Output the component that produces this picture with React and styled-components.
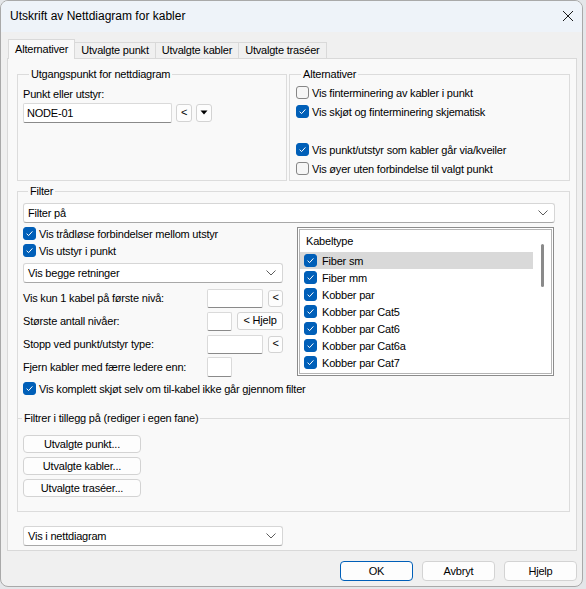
import React from "react";
import styled, { createGlobalStyle } from "styled-components";

const FONT = `"Liberation Sans", Arial, sans-serif`;

const GlobalStyle = createGlobalStyle`
  html, body { margin: 0; padding: 0; background: #e4e6e9; }
  body { font-family: ${FONT}; font-size: 11px; letter-spacing: -0.2px; color: #000; }
  * { box-sizing: border-box; }
`;

const Window = styled.div`
  width: 583px;
  height: 587px;
  background: #f0f0f0;
  border: 1px solid #a9a9a9;
  border-radius: 8px;
  overflow: hidden;
  display: flex;
  flex-direction: column;
`;

const TitleBar = styled.div`
  height: 31px;
  flex: none;
  background: #eef3f9;
  display: flex;
  align-items: center;
  justify-content: space-between;
  padding: 0 7px 1px 9px;
  font-size: 12px;
  letter-spacing: 0;
`;

const CloseBtn = styled.div`
  width: 14px;
  height: 14px;
  display: flex;
  align-items: center;
  justify-content: center;
`;

const Body = styled.div`
  flex: 1;
  display: flex;
  flex-direction: column;
  padding: 7px 5px 0 6px;
`;

const TabStrip = styled.div`
  display: flex;
  align-items: flex-end;
  height: 20px;
  padding-left: 1px;
  position: relative;
  z-index: 1;
  margin-bottom: -1px;
`;

const Tab = styled.div`
  height: ${(p) => (p.$active ? "20px" : "17px")};
  padding: ${(p) => (p.$active ? "0 6px 2px" : "0 6px 1px")};
  display: flex;
  align-items: center;
  border: 1px solid #d9d9d9;
  border-bottom: ${(p) => (p.$active ? "none" : "1px solid #d9d9d9")};
  margin-left: ${(p) => (p.$first ? "0" : "-1px")};
  background: ${(p) => (p.$active ? "#f9f9f9" : "#f0f0f0")};
  white-space: nowrap;
`;

const Panel = styled.div`
  width: 570px;
  height: 493px;
  background: #f9f9f9;
  border: 1px solid #d9d9d9;
  padding: 8px 6px 0 9px;
  display: flex;
  flex-direction: column;
`;

const TopRow = styled.div`
  display: grid;
  grid-template-columns: 270px 281px;
  column-gap: 2px;
  height: 114px;
`;

const Group = styled.fieldset`
  margin: 0;
  margin-top: ${(p) => p.$mt || "0"};
  min-width: 0;
  border: 1px solid #dcdcdc;
  padding: ${(p) => p.$pad || "0 5px"};
  display: flex;
  flex-direction: column;
`;

const Legend = styled.legend`
  padding: 0 2px;
  margin-left: ${(p) => p.$ml || "5px"};
  line-height: 15px;
`;

const Label = styled.div`
  line-height: 16px;
  white-space: nowrap;
  margin-top: ${(p) => p.$mt || "0"};
`;

const InputRow = styled.div`
  display: flex;
  align-items: center;
  gap: 4px;
  margin-top: ${(p) => p.$mt || "0"};
`;

const TextBox = styled.div`
  width: ${(p) => p.$w}px;
  height: ${(p) => p.$h || 20}px;
  background: #fff;
  border: 1px solid #dadada;
  border-bottom-color: #8a8a8a;
  border-radius: 2px;
  padding-left: 3px;
  display: flex;
  align-items: center;
  flex: none;
`;

const SmallBtn = styled.div`
  width: ${(p) => p.$w || 16}px;
  height: ${(p) => p.$h || 18}px;
  background: #fdfdfd;
  border: 1px solid #d3d3d3;
  border-radius: 3px;
  display: flex;
  align-items: center;
  justify-content: center;
  line-height: 1;
  flex: none;
  padding-bottom: 1px;
  white-space: nowrap;
`;

const CheckRow = styled.div`
  display: flex;
  align-items: center;
  gap: ${(p) => p.$gap || 3}px;
  height: ${(p) => p.$h || 19}px;
  white-space: nowrap;
  margin-top: ${(p) => p.$mt || "0"};
`;

const Box = styled.span`
  width: 13px;
  height: 13px;
  flex: none;
  border-radius: 3px;
  background: ${(p) => (p.$checked ? "#005fb8" : "#f6f6f6")};
  border: 1px solid ${(p) => (p.$checked ? "#005fb8" : "#868686")};
  display: flex;
  align-items: center;
  justify-content: center;
`;

const CheckMark = () => (
  <svg width="9" height="9" viewBox="0 0 9 9">
    <path d="M1.6 4.7 L3.6 6.6 L7.4 2.4" fill="none" stroke="#fff" strokeWidth="1" />
  </svg>
);

const Check = ({ checked, label, h, gap, mt }) => (
  <CheckRow $h={h} $gap={gap} $mt={mt}>
    <Box $checked={checked}>{checked && <CheckMark />}</Box>
    <span>{label}</span>
  </CheckRow>
);

const Spacer = styled.div`
  height: ${(p) => p.$h}px;
  flex: none;
`;

const ComboBox = styled.div`
  width: ${(p) => (p.$w ? `${p.$w}px` : "100%")};
  height: 20px;
  background: #fff;
  border: 1px solid #d6d6d6;
  border-bottom-color: #a8a8a8;
  border-radius: 3px;
  display: flex;
  align-items: center;
  justify-content: space-between;
  padding: 0 6px 0 4px;
  flex: none;
  margin-top: ${(p) => p.$mt || "0"};
  margin-left: ${(p) => p.$ml || "0"};
`;

const Chevron = () => (
  <svg width="10" height="6" viewBox="0 0 10 6">
    <path d="M0.5 0.5 L5 5 L9.5 0.5" fill="none" stroke="#5c5c5c" strokeWidth="1" />
  </svg>
);

const Combo = ({ text, w, mt, ml }) => (
  <ComboBox $w={w} $mt={mt} $ml={ml}>
    <span>{text}</span>
    <Chevron />
  </ComboBox>
);

const TwoCol = styled.div`
  display: grid;
  grid-template-columns: 260px 257px;
  column-gap: 14px;
  margin-top: 2px;
`;

const LeftCol = styled.div`
  display: flex;
  flex-direction: column;
`;

const FormGrid = styled.div`
  display: grid;
  grid-template-columns: 184px auto;
  row-gap: 3px;
  margin-top: 5px;
`;

const FormLabel = styled.div`
  height: 20px;
  display: flex;
  align-items: center;
  white-space: nowrap;
`;

const FormCtl = styled.div`
  display: flex;
  align-items: center;
  gap: ${(p) => p.$gap || 5}px;
`;

const ListBox = styled.div`
  margin-top: 2px;
  height: 149px;
  border: 1px solid #8c8c8c;
  box-shadow: inset 0 0 0 1px #ffffff, inset 0 0 0 2px #b4b4b4;
  background: #fff;
  display: flex;
  padding: 2px;
`;

const ListItems = styled.div`
  flex: 1;
  display: flex;
  flex-direction: column;
`;

const ListHeader = styled.div`
  height: 22px;
  display: flex;
  align-items: center;
  padding-left: 6px;
`;

const ListItem = styled.div`
  height: 17px;
  display: flex;
  align-items: center;
  gap: 5px;
  padding-left: 4px;
  background: ${(p) => (p.$sel ? "#d9d9d9" : "transparent")};
  white-space: nowrap;
`;

const ScrollTrack = styled.div`
  width: 18px;
  flex: none;
  display: flex;
  justify-content: center;
  padding-top: 14px;
`;

const ScrollThumb = styled.div`
  width: 3px;
  height: 43px;
  border-radius: 2px;
  background: #8a8a8a;
`;

const SubGroup = styled.fieldset`
  margin: 15px -14px 0 -6px;
  border: none;
  border-top: 1px solid #dcdcdc;
  padding: 9px 0 14px 6px;
  display: flex;
  flex-direction: column;
  gap: 4px;
  min-width: 0;
`;

const PushBtn = styled.div`
  width: ${(p) => p.$w}px;
  height: ${(p) => p.$h}px;
  background: #fdfdfd;
  border: 1px solid ${(p) => (p.$default ? "#005fb8" : "#d3d3d3")};
  border-radius: 4px;
  display: flex;
  align-items: center;
  justify-content: center;
  white-space: nowrap;
  flex: none;
`;

const Footer = styled.div`
  display: flex;
  justify-content: flex-end;
  gap: 9px;
  padding-top: 10px;
`;

const cableTypes = [
  "Fiber sm",
  "Fiber mm",
  "Kobber par",
  "Kobber par Cat5",
  "Kobber par Cat6",
  "Kobber par Cat6a",
  "Kobber par Cat7",
];

const DropTriangle = () => (
  <svg width="8" height="5" viewBox="0 0 8 5">
    <path d="M0.5 0.5 L7.5 0.5 L4 4.5 Z" fill="#000" />
  </svg>
);

export default function App() {
  return (
    <>
      <GlobalStyle />
      <Window>
        <TitleBar>
          <span>Utskrift av Nettdiagram for kabler</span>
          <CloseBtn>
            <svg width="12" height="12" viewBox="0 0 12 12">
              <path d="M1 1 L11 11 M11 1 L1 11" stroke="#1a1a1a" strokeWidth="1" />
            </svg>
          </CloseBtn>
        </TitleBar>
        <Body>
          <TabStrip>
            <Tab $active $first>Alternativer</Tab>
            <Tab>Utvalgte punkt</Tab>
            <Tab>Utvalgte kabler</Tab>
            <Tab>Utvalgte traséer</Tab>
          </TabStrip>
          <Panel>
            <TopRow>
              <Group $pad="0 5px">
                <Legend $ml="6px">Utgangspunkt for nettdiagram</Legend>
                <Label $mt="4px">Punkt eller utstyr:</Label>
                <InputRow $mt="1px">
                  <TextBox $w={149}>NODE-01</TextBox>
                  <SmallBtn>&lt;</SmallBtn>
                  <SmallBtn>
                    <DropTriangle />
                  </SmallBtn>
                </InputRow>
              </Group>
              <Group $pad="1px 6px 0">
                <Legend $ml="5px">Alternativer</Legend>
                <Check label="Vis finterminering av kabler i punkt" />
                <Check checked label="Vis skjøt og finterminering skjematisk" />
                <Spacer $h={19} />
                <Check checked label="Vis punkt/utstyr som kabler går via/kveiler" />
                <Check label="Vis øyer uten forbindelse til valgt punkt" />
              </Group>
            </TopRow>
            <Group $pad="4px 14px 0 5px" $mt="3px">
              <Legend $ml="5px">Filter</Legend>
              <Combo text="Filter på" />
              <TwoCol>
                <LeftCol>
                  <Check checked h={17} label="Vis trådløse forbindelser mellom utstyr" />
                  <Check checked h={17} label="Vis utstyr i punkt" />
                  <Combo text="Vis begge retninger" mt="4px" />
                  <FormGrid>
                    <FormLabel>Vis kun 1 kabel på første nivå:</FormLabel>
                    <FormCtl>
                      <TextBox $w={56} $h={19} />
                      <SmallBtn $w={15} $h={17}>&lt;</SmallBtn>
                    </FormCtl>
                    <FormLabel>Største antall nivåer:</FormLabel>
                    <FormCtl>
                      <TextBox $w={25} $h={19} />
                      <SmallBtn $w={46} $h={18}>&lt; Hjelp</SmallBtn>
                    </FormCtl>
                    <FormLabel>Stopp ved punkt/utstyr type:</FormLabel>
                    <FormCtl>
                      <TextBox $w={56} $h={19} />
                      <SmallBtn $w={15} $h={17}>&lt;</SmallBtn>
                    </FormCtl>
                    <FormLabel>Fjern kabler med færre ledere enn:</FormLabel>
                    <FormCtl>
                      <TextBox $w={25} $h={20} />
                    </FormCtl>
                  </FormGrid>
                </LeftCol>
                <ListBox>
                  <ListItems>
                    <ListHeader>Kabeltype</ListHeader>
                    {cableTypes.map((c, i) => (
                      <ListItem key={c} $sel={i === 0}>
                        <Box $checked>
                          <CheckMark />
                        </Box>
                        <span>{c}</span>
                      </ListItem>
                    ))}
                  </ListItems>
                  <ScrollTrack>
                    <ScrollThumb />
                  </ScrollTrack>
                </ListBox>
              </TwoCol>
              <Check checked h={15} mt="4px" label="Vis komplett skjøt selv om til-kabel ikke går gjennom filter" />
              <SubGroup>
                <Legend $ml="-1px">Filtrer i tillegg på (rediger i egen fane)</Legend>
                <PushBtn $w={118} $h={18}>Utvalgte punkt...</PushBtn>
                <PushBtn $w={118} $h={18}>Utvalgte kabler...</PushBtn>
                <PushBtn $w={118} $h={18}>Utvalgte traséer...</PushBtn>
              </SubGroup>
            </Group>
            <Combo text="Vis i nettdiagram" w={260} mt="14px" ml="6px" />
          </Panel>
          <Footer>
            <PushBtn $w={73} $h={20} $default>OK</PushBtn>
            <PushBtn $w={73} $h={20}>Avbryt</PushBtn>
            <PushBtn $w={73} $h={20}>Hjelp</PushBtn>
          </Footer>
        </Body>
      </Window>
    </>
  );
}
